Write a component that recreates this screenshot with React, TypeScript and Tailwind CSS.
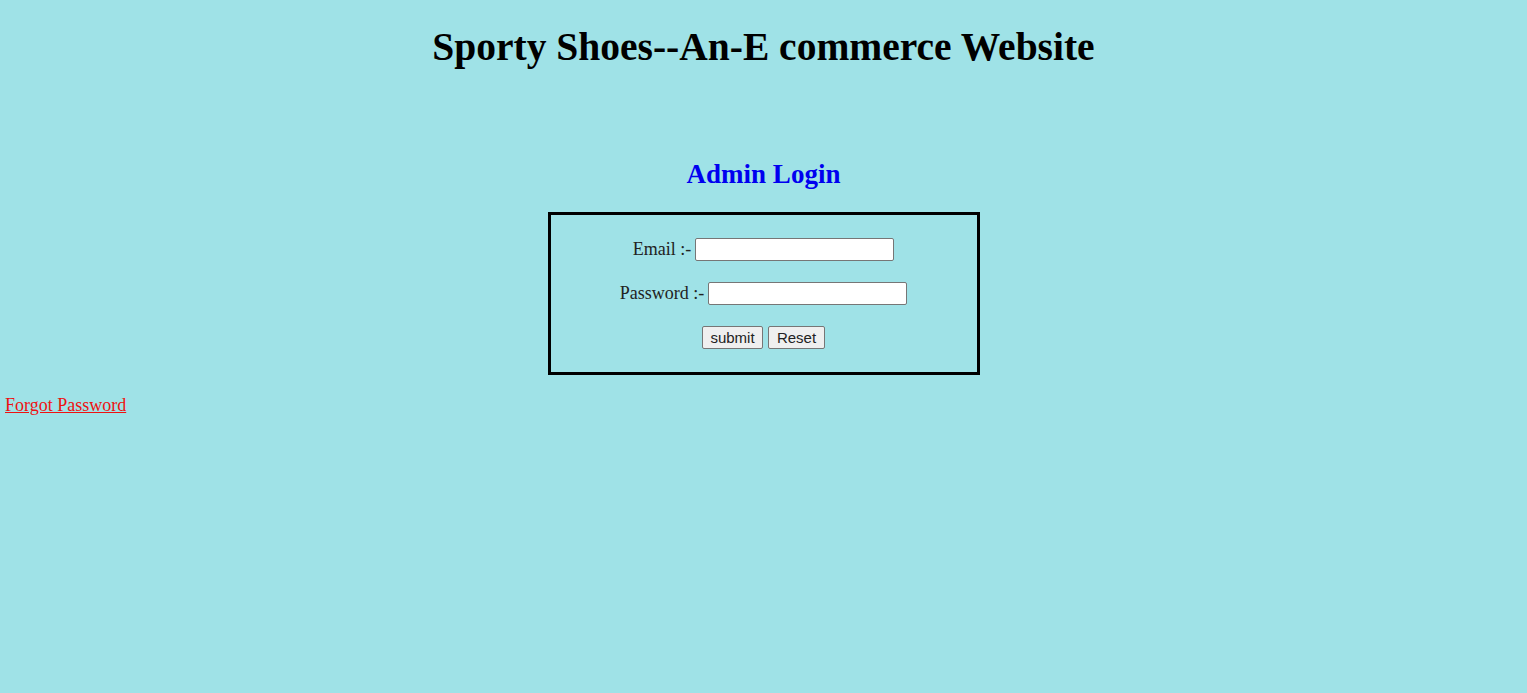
import React from 'react';

const App: React.FC = () => {
  return (
    <div className="min-h-[693px] w-full bg-[#9fe2e7] font-['Liberation_Serif',serif] text-black">
      <h1 className="pt-[22px] text-center text-[39.5px] font-bold leading-[50px]">
        Sporty Shoes--An-E commerce Website
      </h1>

      <h2 className="mt-[86px] text-center text-[27px] font-bold leading-[32px] text-[#0000f0]">
        Admin Login
      </h2>

      <div className="mx-auto mt-[22px] flex h-[163px] w-[432px] flex-col items-center border-[3px] border-black pt-[22px] text-[18px] text-[#222]">
        <div className="flex h-[24px] items-center">
          <span className="mr-[4px]">Email :-</span>
          <input type="text" className="h-[23px] w-[199px] rounded-[2px] border border-[#767676] bg-white" />
        </div>
        <div className="mt-[20px] flex h-[24px] items-center">
          <span className="mr-[4px]">Password :-</span>
          <input type="password" className="h-[23px] w-[199px] rounded-[2px] border border-[#767676] bg-white" />
        </div>
        <div className="mt-[20px] flex h-[24px] items-center gap-[5px] font-['Liberation_Sans',sans-serif] text-[15px]">
          <button className="h-[23px] w-[61px] rounded-[2px] border border-[#767676] bg-[#efefef] leading-none">
            submit
          </button>
          <button className="h-[23px] w-[57px] rounded-[2px] border border-[#767676] bg-[#efefef] leading-none">
            Reset
          </button>
        </div>
      </div>

      <div className="mt-[19px] pl-[5px] text-[18px] leading-[22px]">
        <a href="#" className="text-[#ee1111] underline">
          Forgot Password
        </a>
      </div>
    </div>
  );
};

export default App;
